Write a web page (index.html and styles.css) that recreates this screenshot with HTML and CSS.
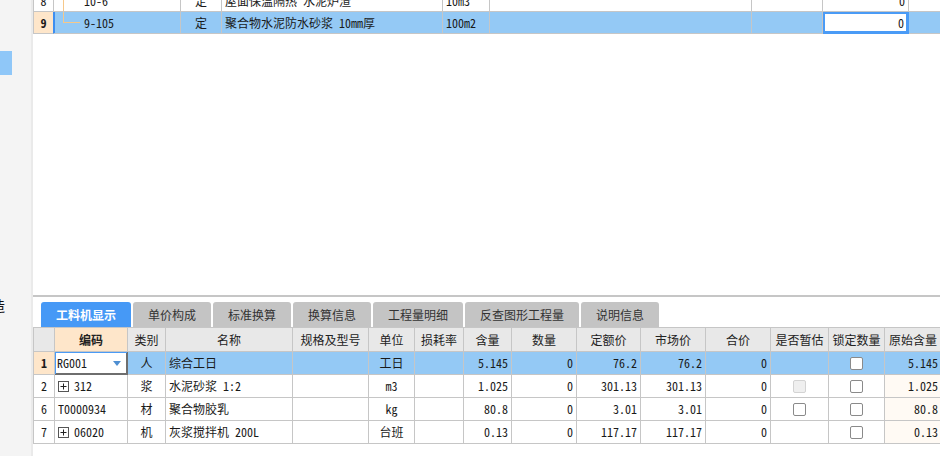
FILE: index.html
```html
<!DOCTYPE html>
<html lang="zh">
<head>
<meta charset="utf-8">
<title>工料机显示</title>
<link rel="stylesheet" href="styles.css">
</head>
<body>
<div class="app">
  <aside class="sidebar">
    <div class="side-sel"></div>
    <div class="side-char">造</div>
  </aside>
  <main class="main">
    <section class="upper">
      <div class="grid top">
        <div class="row">
          <div class="cell c num">8</div>
          <div class="cell code"><span class="branch full"></span><span>10-6</span></div>
          <div class="cell c">定</div>
          <div class="cell">屋面保温隔热 水泥炉渣</div>
          <div class="cell">10m3</div>
          <div class="cell"></div>
          <div class="cell"></div>
          <div class="cell r">0</div>
          <div class="cell"></div>
        </div>
        <div class="row sel">
          <div class="cell c num hd bluebar">9</div>
          <div class="cell code"><span class="branch"></span><span>9-105</span></div>
          <div class="cell c">定</div>
          <div class="cell">聚合物水泥防水砂浆 10mm厚</div>
          <div class="cell">100m2</div>
          <div class="cell"></div>
          <div class="cell"></div>
          <div class="cell r edit">0</div>
          <div class="cell"></div>
        </div>
      </div>
    </section>
    <div class="splitter"></div>
    <nav class="tabs">
      <div class="tab active w90">工料机显示</div>
      <div class="tab w78">单价构成</div>
      <div class="tab w78">标准换算</div>
      <div class="tab w78">换算信息</div>
      <div class="tab w90">工程量明细</div>
      <div class="tab w114">反查图形工程量</div>
      <div class="tab w78">说明信息</div>
    </nav>
    <div class="grid bottom">
      <div class="row head">
        <div class="cell"></div>
        <div class="cell c key">编码</div>
        <div class="cell c">类别</div>
        <div class="cell c">名称</div>
        <div class="cell c">规格及型号</div>
        <div class="cell c">单位</div>
        <div class="cell c">损耗率</div>
        <div class="cell c">含量</div>
        <div class="cell c">数量</div>
        <div class="cell c">定额价</div>
        <div class="cell c">市场价</div>
        <div class="cell c">合价</div>
        <div class="cell c">是否暂估</div>
        <div class="cell c">锁定数量</div>
        <div class="cell c">原始含量</div>
      </div>
      <div class="row sel">
        <div class="cell c num hd">1</div>
        <div class="cell focus"><span>RG001</span><span class="drop"></span></div>
        <div class="cell c">人</div>
        <div class="cell">综合工日</div>
        <div class="cell"></div>
        <div class="cell c">工日</div>
        <div class="cell"></div>
        <div class="cell r">5.145</div>
        <div class="cell r">0</div>
        <div class="cell r">76.2</div>
        <div class="cell r">76.2</div>
        <div class="cell r">0</div>
        <div class="cell"></div>
        <div class="cell c"><span class="cb"></span></div>
        <div class="cell r">5.145</div>
      </div>
      <div class="row">
        <div class="cell c num">2</div>
        <div class="cell"><svg class="plus" width="11" height="11" viewBox="0 0 11 11"><rect x="0.5" y="0.5" width="10" height="10" fill="#fff" stroke="#555"/><path d="M2.5 5.5h6M5.5 2.5v6" stroke="#222" fill="none"/></svg><span>312</span></div>
        <div class="cell c">浆</div>
        <div class="cell">水泥砂浆 1:2</div>
        <div class="cell"></div>
        <div class="cell c">m3</div>
        <div class="cell"></div>
        <div class="cell r">1.025</div>
        <div class="cell r">0</div>
        <div class="cell r">301.13</div>
        <div class="cell r">301.13</div>
        <div class="cell r">0</div>
        <div class="cell c"><span class="cb dis"></span></div>
        <div class="cell c"><span class="cb"></span></div>
        <div class="cell r orig">1.025</div>
      </div>
      <div class="row">
        <div class="cell c num">6</div>
        <div class="cell">T0000934</div>
        <div class="cell c">材</div>
        <div class="cell">聚合物胶乳</div>
        <div class="cell"></div>
        <div class="cell c">kg</div>
        <div class="cell"></div>
        <div class="cell r">80.8</div>
        <div class="cell r">0</div>
        <div class="cell r">3.01</div>
        <div class="cell r">3.01</div>
        <div class="cell r">0</div>
        <div class="cell c"><span class="cb"></span></div>
        <div class="cell c"><span class="cb"></span></div>
        <div class="cell r orig">80.8</div>
      </div>
      <div class="row">
        <div class="cell c num">7</div>
        <div class="cell"><svg class="plus" width="11" height="11" viewBox="0 0 11 11"><rect x="0.5" y="0.5" width="10" height="10" fill="#fff" stroke="#555"/><path d="M2.5 5.5h6M5.5 2.5v6" stroke="#222" fill="none"/></svg><span>06020</span></div>
        <div class="cell c">机</div>
        <div class="cell">灰浆搅拌机 200L</div>
        <div class="cell"></div>
        <div class="cell c">台班</div>
        <div class="cell"></div>
        <div class="cell r">0.13</div>
        <div class="cell r">0</div>
        <div class="cell r">117.17</div>
        <div class="cell r">117.17</div>
        <div class="cell r">0</div>
        <div class="cell"></div>
        <div class="cell c"><span class="cb"></span></div>
        <div class="cell r orig">0.13</div>
      </div>
    </div>
  </main>
</div>
</body>
</html>
```

FILE: styles.css
```css
html, body {
  margin: 0;
  padding: 0;
  background: #fff;
}
body {
  width: 940px;
  height: 456px;
  overflow: hidden;
  font-family: "Noto Sans CJK SC", "Noto Sans", sans-serif;
  font-size: 12px;
  color: #1a1a1a;
}
.app {
  display: flex;
  height: 456px;
}
.sidebar {
  width: 31px;
  flex: none;
  background: #f4f4f4;
  border-right: 2px solid #eaeaea;
  display: flex;
  flex-direction: column;
  overflow: hidden;
}
.side-sel {
  margin-top: 51px;
  width: 12px;
  height: 24px;
  background: #8fc7f8;
}
.side-char {
  margin-top: 222px;
  margin-left: -9px;
  font-size: 14px;
  line-height: 16px;
  color: #111;
}
.main {
  flex: 1;
  min-width: 0;
  display: flex;
  flex-direction: column;
  overflow: hidden;
}
.upper {
  flex: 1;
  min-height: 0;
  overflow: hidden;
}
.grid {
  width: 908px;
  border-left: 1px solid #c6c6c6;
  font-family: "Noto Sans Mono CJK SC", "Noto Sans CJK SC", monospace;
}
.top {
  margin-top: -10px;
}
.row {
  display: grid;
  height: 22px;
}
.top .row {
  grid-template-columns: 20px 127px 41px 221px 47px 262px 71px 86px 33px;
}
.bottom {
  border-top: 1px solid #c6c6c6;
  margin-bottom: 12px;
}
.bottom .row {
  grid-template-columns: 21px 73px 38px 127px 76px 46px 49px 48px 65px 64px 65px 65px 58px 56px 57px;
  height: 23px;
}
.bottom .row.head {
  height: 24px;
  background: #e8e8e8;
  font-family: "Noto Sans CJK SC", sans-serif;
  color: #222;
}
.cell {
  box-sizing: border-box;
  border-right: 1px solid #c6c6c6;
  border-bottom: 1px solid #c6c6c6;
  display: flex;
  align-items: center;
  padding: 0 3px;
  white-space: nowrap;
  overflow: hidden;
  line-height: 14px;
  min-width: 0;
}
.cell.c { justify-content: center; padding: 0; }
.cell.r { justify-content: flex-end; }
.sel { background: #94c9f5; }
.num { background: #fff; }
.num.hd {
  background: #fee6ca;
  font-weight: bold;
}
.head .key {
  background: #fee6ca;
  font-weight: bold;
}
.bluebar { border-right-color: #3d8ef0; }
.top .sel .code { box-shadow: inset 1px 0 0 #3d8ef0; }
.code {
  padding: 0;
  align-items: stretch;
}
.branch {
  flex: none;
  width: 17px;
  margin-left: 9px;
  margin-right: 4px;
  height: 11px;
  box-sizing: border-box;
  border-left: 1px solid #f6c88a;
  border-bottom: 1px solid #f6c88a;
}
.branch.full {
  height: auto;
  border-bottom: none;
}
.code span:last-child {
  align-self: center;
}
.edit {
  background: #fff;
  box-shadow: inset 0 0 0 2px #4a9bf6;
  border-right-color: #4a9bf6;
  border-bottom-color: #4a9bf6;
  padding-right: 4px;
}
.splitter {
  flex: none;
  height: 2px;
  background: #c6c6c6;
  margin-bottom: 5px;
}
.tabs {
  flex: none;
  display: flex;
  gap: 2px;
  height: 25px;
  padding-left: 8px;
}
.tab {
  box-sizing: border-box;
  background: #c4c4c4;
  border-radius: 3px 3px 0 0;
  display: flex;
  align-items: center;
  justify-content: center;
  color: #333;
  font-size: 12px;
}
.tab.active {
  background: #4699f6;
  color: #fff;
  font-weight: bold;
}
.w78 { width: 78px; }
.w90 { width: 90px; }
.w114 { width: 114px; }
.focus {
  background: #fff;
  justify-content: space-between;
  padding-left: 2px;
  padding-right: 6px;
  border-right-color: #6e6e6e;
  border-bottom-color: #6e6e6e;
  box-shadow: inset 1px 1px 0 #4a9bf6, inset -1px -1px 0 #6e6e6e;
}
.drop {
  width: 0;
  height: 0;
  border-left: 4px solid transparent;
  border-right: 4px solid transparent;
  border-top: 5px solid #4f8fd2;
}
.plus {
  flex: none;
  margin-left: 0;
  margin-right: 5px;
}
.cb {
  display: block;
  width: 13px;
  height: 13px;
  box-sizing: border-box;
  border: 1px solid #8a8a8a;
  border-radius: 2px;
  background: #fff;
}
.cb.dis {
  background: #efefef;
  border-color: #d3d3d3;
}
.orig { background: #fffaf4; }
.sel .orig { background: transparent; }
```
